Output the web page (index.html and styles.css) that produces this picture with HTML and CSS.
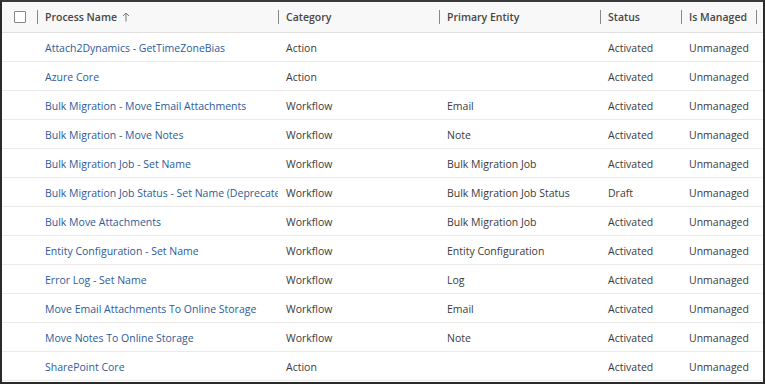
FILE: index.html
```html
<!DOCTYPE html>
<html>
<head>
<meta charset="utf-8">
<link rel="stylesheet" href="styles.css">
</head>
<body>
<div class="frame">
  <div class="grid">
    <div class="row head">
      <div class="cell chk"><span class="box"></span></div>
      <div class="cell h"><span class="sep"></span>Process Name<svg class="arrow" width="8" height="10" viewBox="0 0 8 10"><path d="M4 9.5V1M1 4L4 1L7 4" fill="none" stroke="#797775" stroke-width="1"/></svg></div>
      <div class="cell h"><span class="sep"></span>Category</div>
      <div class="cell h"><span class="sep"></span>Primary Entity</div>
      <div class="cell h"><span class="sep"></span>Status</div>
      <div class="cell h"><span class="sep"></span>Is Managed</div>
      <div class="cell h"><span class="sep"></span></div>
    </div>
    <div class="row"><div class="cell chk"></div><div class="cell link">Attach2Dynamics - GetTimeZoneBias</div><div class="cell">Action</div><div class="cell"></div><div class="cell">Activated</div><div class="cell">Unmanaged</div><div class="cell"></div></div>
    <div class="row"><div class="cell chk"></div><div class="cell link">Azure Core</div><div class="cell">Action</div><div class="cell"></div><div class="cell">Activated</div><div class="cell">Unmanaged</div><div class="cell"></div></div>
    <div class="row"><div class="cell chk"></div><div class="cell link">Bulk Migration - Move Email Attachments</div><div class="cell">Workflow</div><div class="cell">Email</div><div class="cell">Activated</div><div class="cell">Unmanaged</div><div class="cell"></div></div>
    <div class="row"><div class="cell chk"></div><div class="cell link">Bulk Migration - Move Notes</div><div class="cell">Workflow</div><div class="cell">Note</div><div class="cell">Activated</div><div class="cell">Unmanaged</div><div class="cell"></div></div>
    <div class="row"><div class="cell chk"></div><div class="cell link">Bulk Migration Job - Set Name</div><div class="cell">Workflow</div><div class="cell">Bulk Migration Job</div><div class="cell">Activated</div><div class="cell">Unmanaged</div><div class="cell"></div></div>
    <div class="row"><div class="cell chk"></div><div class="cell link">Bulk Migration Job Status - Set Name (Deprecated)</div><div class="cell">Workflow</div><div class="cell">Bulk Migration Job Status</div><div class="cell">Draft</div><div class="cell">Unmanaged</div><div class="cell"></div></div>
    <div class="row"><div class="cell chk"></div><div class="cell link">Bulk Move Attachments</div><div class="cell">Workflow</div><div class="cell">Bulk Migration Job</div><div class="cell">Activated</div><div class="cell">Unmanaged</div><div class="cell"></div></div>
    <div class="row"><div class="cell chk"></div><div class="cell link">Entity Configuration - Set Name</div><div class="cell">Workflow</div><div class="cell">Entity Configuration</div><div class="cell">Activated</div><div class="cell">Unmanaged</div><div class="cell"></div></div>
    <div class="row"><div class="cell chk"></div><div class="cell link">Error Log - Set Name</div><div class="cell">Workflow</div><div class="cell">Log</div><div class="cell">Activated</div><div class="cell">Unmanaged</div><div class="cell"></div></div>
    <div class="row"><div class="cell chk"></div><div class="cell link">Move Email Attachments To Online Storage</div><div class="cell">Workflow</div><div class="cell">Email</div><div class="cell">Activated</div><div class="cell">Unmanaged</div><div class="cell"></div></div>
    <div class="row"><div class="cell chk"></div><div class="cell link">Move Notes To Online Storage</div><div class="cell">Workflow</div><div class="cell">Note</div><div class="cell">Activated</div><div class="cell">Unmanaged</div><div class="cell"></div></div>
    <div class="row last"><div class="cell chk"></div><div class="cell link">SharePoint Core</div><div class="cell">Action</div><div class="cell"></div><div class="cell">Activated</div><div class="cell">Unmanaged</div><div class="cell"></div></div>
  </div>
</div>
</body>
</html>
```
FILE: styles.css
```css
html, body {
  margin: 0;
  padding: 0;
  background: #fff;
}
body {
  font-family: "Open Sans", "Noto Sans", sans-serif;
  font-size: 10.5px;
  color: #3b3a39;
}
.frame {
  width: 765px;
  height: 384px;
  box-sizing: border-box;
  border-top: 2px solid #3a3a3a;
  border-left: 2px solid #2a2a2a;
  border-right: 2px solid #2a2a2a;
  border-bottom: 2px solid #2a2a2a;
  overflow: hidden;
  background: #fff;
}
.grid {
  display: flex;
  flex-direction: column;
}
.row {
  display: grid;
  grid-template-columns: 35px 241px 161px 161px 81px 75px 1fr;
  height: 29px;
  box-sizing: border-box;
  border-bottom: 1px solid #edebe9;
  align-items: center;
}
.row.head {
  height: 31px;
  background: #f8f8f8;
  border-bottom: 1px solid #e1dfdd;
}
.cell {
  padding-left: 8px;
  padding-top: 1px;
  white-space: nowrap;
  overflow: hidden;
  display: flex;
  align-items: center;
  height: 100%;
  box-sizing: border-box;
}
.cell.chk {
  padding-left: 12px;
  padding-top: 0;
}
.box {
  width: 12px;
  height: 12px;
  border: 1px solid #8a8886;
  box-sizing: border-box;
  border-radius: 1px;
  background: #fff;
}
.cell.h {
  position: relative;
  font-weight: 600;
  color: #484644;
  padding-top: 0;
}
.sep {
  position: absolute;
  left: 0;
  top: 8px;
  width: 1px;
  height: 14px;
  background: #8a8886;
}
.arrow {
  margin-left: 5px;
}
.link {
  color: #2d5b9a;
}
```
